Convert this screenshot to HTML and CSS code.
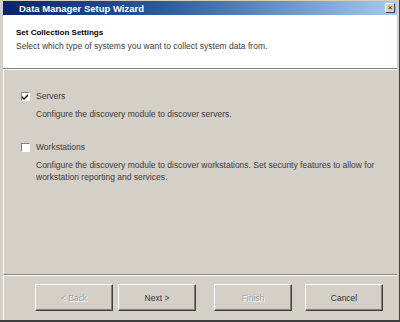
FILE: index.html
```html
<!DOCTYPE html>
<html lang="en">
<head>
    <meta charset="UTF-8">
    <title>Data Manager Setup Wizard</title>
    <link rel="stylesheet" href="styles.css">
</head>
<body>
    <div class="window">
        <div class="titlebar">
            <span class="title">Data Manager Setup Wizard</span>
            <span class="close">&#215;</span>
        </div>
        <div class="header">
            <h1>Set Collection Settings</h1>
            <p>Select which type of systems you want to collect system data from.</p>
        </div>
        <div class="content">
            <div class="option">
                <label class="check-row"><span class="box checked">
                    <svg width="7" height="7" viewBox="0 0 7 7"><path d="M0 3 L2 5 L6 1 L6 3 L2 7 L0 5 Z" fill="#000"/></svg>
                </span>Servers</label>
                <p class="desc">Configure the discovery module to discover servers.</p>
            </div>
            <div class="option">
                <label class="check-row"><span class="box"></span>Workstations</label>
                <p class="desc">Configure the discovery module to discover workstations. Set security features to allow for workstation reporting and services.</p>
            </div>
        </div>
        <div class="buttons">
            <button class="btn" disabled>&lt; Back</button>
            <button class="btn">Next &gt;</button>
            <button class="btn finish" disabled>Finish</button>
            <button class="btn">Cancel</button>
        </div>
    </div>
</body>
</html>
```

FILE: styles.css
```css
body {
    margin: 0;
    padding: 0;
    font-family: "Liberation Sans", Arial, sans-serif;
    font-size: 8.5px;
    background-color: #d4d0c8;
}
.window {
    width: 400px;
    height: 322px;
    box-sizing: border-box;
    background-color: #d4d0c8;
    padding: 1px 2px 0 3px;
    border-right: 1px solid #404040;
    border-bottom: 2px solid #404040;
    display: flex;
    flex-direction: column;
}
.titlebar {
    height: 14px;
    background: linear-gradient(to right, #0a246a 0%, #2a5a9a 40%, #a6caf0 100%);
    display: flex;
    align-items: center;
    justify-content: space-between;
    padding: 0 2px 0 16px;
}
.title {
    color: #fff;
    font-weight: bold;
    font-size: 9.5px;
}
.close {
    width: 8px;
    height: 8px;
    background-color: #d4d0c8;
    border: 1px solid;
    border-color: #fff #404040 #404040 #fff;
    font-size: 8px;
    line-height: 8px;
    text-align: center;
    color: #000;
}
.header {
    background-color: #fff;
    height: 53px;
    padding: 0 0 0 13px;
    border-bottom: 1px solid #808080;
    box-shadow: 0 1px 0 #fff;
}
.header h1 {
    font-size: 8px;
    font-weight: bold;
    color: #000;
    margin: 13px 0 4px;
}
.header p {
    margin: 0;
    color: #3a3a3a;
}
.content {
    flex: 1;
    padding: 22px 0 0 17px;
    border-left: 1px solid #fff;
    border-bottom: 1px solid #808080;
    box-shadow: 0 1px 0 #fff;
}
.option {
    margin-bottom: 22px;
}
.check-row {
    display: flex;
    align-items: center;
    color: #3a3a3a;
    height: 10px;
}
.box {
    width: 9px;
    height: 9px;
    box-sizing: border-box;
    background-color: #fff;
    border: 1px solid;
    border-color: #808080 #fff #fff #808080;
    margin-right: 6px;
    display: flex;
    align-items: center;
    justify-content: center;
}
.desc {
    margin: 7px 0 0 15px;
    color: #3a3a3a;
    width: 345px;
    line-height: 12px;
}
.buttons {
    height: 45px;
    display: flex;
    align-items: center;
    padding: 0 0 0 31px;
    border-left: 1px solid #fff;
}
.btn {
    width: 78px;
    height: 27px;
    background-color: #d4d0c8;
    border: 1px solid;
    border-color: #fff #404040 #404040 #fff;
    box-shadow: inset -1px -1px 0 #808080;
    font-family: "Liberation Sans", Arial, sans-serif;
    font-size: 8.5px;
    color: #333;
    margin-right: 5px;
    padding: 0;
}
.btn:disabled {
    color: #a0a0a0;
    text-shadow: 1px 1px 0 #fff;
}
.finish {
    margin-left: 13px;
    margin-right: 13px;
}
```
